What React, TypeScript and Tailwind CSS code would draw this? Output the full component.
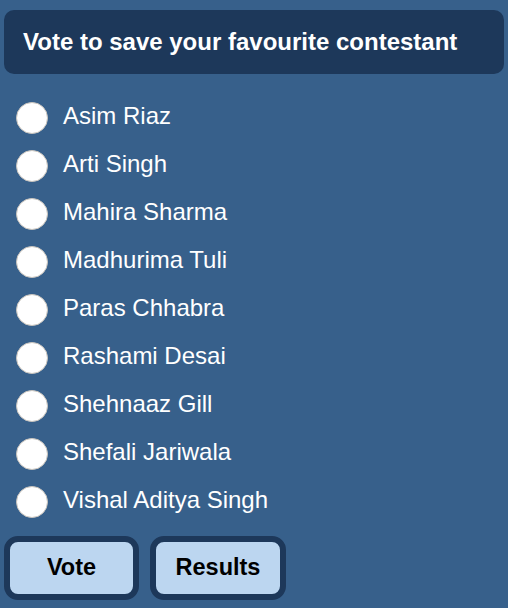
import { useState } from "react";

const contestants = [
  "Asim Riaz",
  "Arti Singh",
  "Mahira Sharma",
  "Madhurima Tuli",
  "Paras Chhabra",
  "Rashami Desai",
  "Shehnaaz Gill",
  "Shefali Jariwala",
  "Vishal Aditya Singh",
];

export default function App() {
  const [choice, setChoice] = useState<string | null>(null);

  return (
    <div className="h-[608px] w-full bg-[#37608b] px-1 pt-2.5 font-['Liberation_Sans',Arial,sans-serif] text-white">
      <div className="flex h-16 items-center rounded-[10px] bg-[#1d385a] px-[19px]">
        <h1 className="text-[24px] font-bold">Vote to save your favourite contestant</h1>
      </div>

      <ul className="mt-5 pl-3">
        {contestants.map((name) => (
          <li key={name}>
            <label className="flex h-12 cursor-pointer items-center gap-[15px]">
              <input
                type="radio"
                name="contestant"
                checked={choice === name}
                onChange={() => setChoice(name)}
                className="h-8 w-8 shrink-0 appearance-none rounded-full border border-[#c9c4bd] bg-white checked:border-[10px] checked:border-[#1d385a]"
              />
              <span className="pb-1 text-[24px] leading-none">{name}</span>
            </label>
          </li>
        ))}
      </ul>

      <div className="mt-2.5 flex gap-[11px]">
        <button className="h-16 w-[135px] rounded-[14px] border-[6px] border-[#1d385a] bg-[#bcd6f0] text-[23.5px] font-bold text-black">
          Vote
        </button>
        <button className="h-16 w-[136px] rounded-[14px] border-[6px] border-[#1d385a] bg-[#bcd6f0] text-[23.5px] font-bold text-black">
          Results
        </button>
      </div>
    </div>
  );
}
